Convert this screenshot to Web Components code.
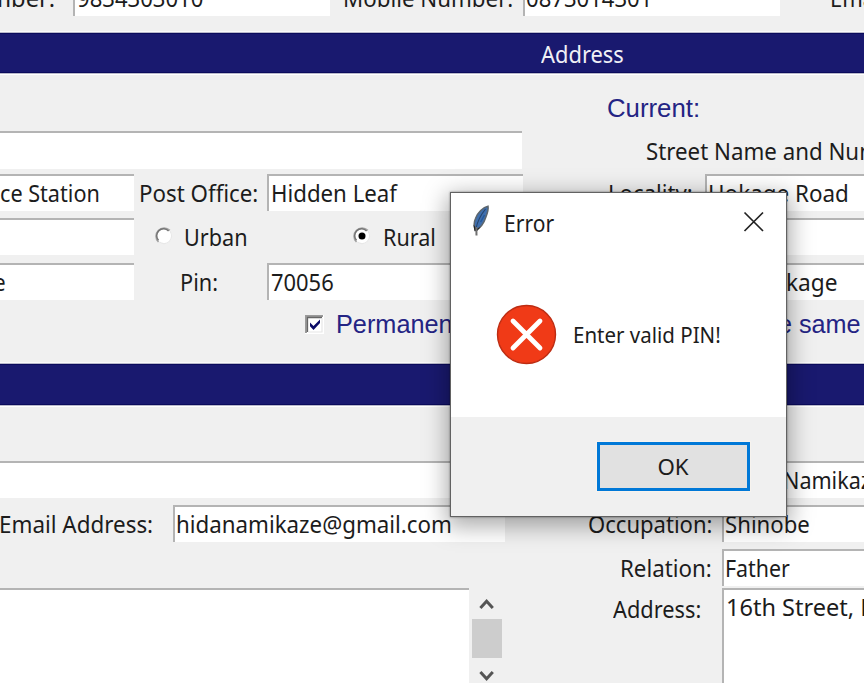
<!DOCTYPE html>
<html lang="en">
<head>
<meta charset="utf-8">
<title>Registration form</title>
<style>
html,body{margin:0;padding:0;width:864px;height:683px;overflow:hidden;background:#f0f0f0}
</style>
</head>
<body>
<registration-form></registration-form>
<script>
const define = (name, html, setup) => customElements.define(name, class extends HTMLElement {
  connectedCallback() {
    if (this.shadowRoot) return;
    this.attachShadow({mode: 'open'}).innerHTML = html;
    if (setup) setup(this, this.shadowRoot);
  }
});
const px = (el, map) => {
  for (const [attr, prop] of Object.entries(map))
    if (el.hasAttribute(attr)) el.style[prop] = el.getAttribute(attr) + 'px';
};

/* Text run fitted to a given advance width, with a 1px inset on each side. */
define('fit-text', `<style>
  :host{display:block;box-sizing:border-box;padding-left:1px;flex:none;height:24px;line-height:24px;white-space:pre;font-family:"Noto Sans",sans-serif;font-size:24px;color:#1c1c1c}
  :host([navy]){font-family:"Liberation Sans",Arial,sans-serif;font-size:25.5px;color:#242484}
  span{display:inline-block;transform-origin:0 50%}
</style><span><slot></slot></span>`, (el, root) => {
  px(el, {w: 'width', x: 'marginLeft', size: 'fontSize'});
  if (el.hasAttribute('y')) {
    el.style.marginTop = el.getAttribute('y') + 'px';
  }
  const s = root.querySelector('span');
  s.style.transform = `scaleX(${(el.getAttribute('w') - 2) / s.offsetWidth})`;
});

define('form-row', `<style>
  :host{display:flex;align-items:center;flex:none;height:37px;overflow:hidden}
</style><slot></slot>`, el => px(el, {h: 'height', y: 'marginTop'}));

define('entry-field', `<style>
  :host{display:flex;flex:none;align-items:center;box-sizing:border-box;height:100%;background:#fff;
    box-shadow:inset 0 2px #b4b4b4;overflow:hidden;padding-right:2px}
  :host([left]){box-shadow:inset 2px 2px #b4b4b4}
  :host([area]){align-items:flex-start}
</style><slot></slot>`, el => px(el, {w: 'width', x: 'marginLeft'}));

define('section-bar', `<style>
  :host{display:flex;flex:none;align-items:center;box-sizing:border-box;height:40px;background:#19196f;
    border-top:1px solid #0b0b5c;border-bottom:1px solid #0b0b5c;box-shadow:0 -1px #b9b9cb,0 1px #b9b9cb,0 2px #fff,0 -2px #fafafa}
</style><slot></slot>`, el => px(el, {h: 'height'}));

define('radio-dot', `<style>:host{display:block;flex:none;width:20px;height:20px}svg{display:block}circle.dot{display:none}:host([checked]) circle.dot{display:block}</style>
<svg width="20" height="20" viewBox="0 0 20 20"><circle cx="10" cy="10" r="8" fill="#fff"/>
<path d="M4.500 16A8 8 0 0 1 15.800 4.400" fill="none" stroke="#a5a5a5" stroke-width="1.700"/>
<path d="M4.500 14.300A6.700 6.700 0 0 1 14.600 5" fill="none" stroke="#757575" stroke-width="1.500"/>
<path d="M16 5.200A7.700 7.700 0 0 1 5.200 16" fill="none" stroke="#e8e8e8" stroke-width="1.200"/>
<circle class="dot" cx="10" cy="10" r="3.500" fill="#000"/></svg>`, el => px(el, {x: 'marginLeft', y: 'marginTop'}));

define('check-square', `<style>:host{display:block;flex:none;width:19px;height:19px;margin-top:1px}svg{display:block}</style>
<svg width="19" height="19" viewBox="0 0 19 19"><path fill="#fff" d="M0 0h19v19H0z"/><path d="M18 1H1v17" fill="none" stroke="#9a9a9a" stroke-width="2"/>
<path d="M17 2.500H2.500V17" fill="none" stroke="#666" stroke-width="1.300"/><path d="M3 17h14V3" fill="none" stroke="#e6e6e6" stroke-width="1.200"/>
<path d="M5 7.600v3.600l3.500 3.800 6.500-7V4.500l-6.500 6.400z" fill="#0b0b68"/></svg>`, el => px(el, {x: 'marginLeft'}));

define('scroll-bar', `<style>
  :host{display:flex;flex-direction:column;flex:none;width:30px;height:100%;margin-left:3px;background:#f0f0f0}
  svg{display:block;flex:none}i{display:block;flex:none;height:39px;width:30px;background:#cdcdcd}
</style><svg width="30" height="31"><path d="M8.400 20l6.200-6.700 6.200 6.700" fill="none" stroke="#555" stroke-width="3"/></svg><i></i>
<svg width="30" height="31"><path d="M8.400 14l6.200 6.700 6.200-6.700" fill="none" stroke="#555" stroke-width="3"/></svg>`);

define('push-button', `<style>
  :host{display:block;flex:none}
  button{display:flex;align-items:center;justify-content:center;box-sizing:border-box;width:153px;height:49px;padding:0 2px 0 0;margin:0;background:#e1e1e1;border:3px solid #0078d7;border-radius:0;box-shadow:0 0 0 1px #f7f3ee}
</style><button><slot></slot></button>`);

define('message-dialog', `<style>
  :host{position:absolute;left:450px;top:192px;width:337px;height:325px;box-sizing:border-box;border:1px solid #626262;background:#fff;
    display:flex;flex-direction:column;box-shadow:0 0 2px rgba(0,0,0,.45),0 6px 22px 3px rgba(0,0,0,.34)}
  header{display:flex;height:60px;flex:none;align-items:center}
  header svg{display:block;flex:none}
  .feather{margin-left:19px;margin-top:-4px}.close{margin-left:188px;margin-top:-2px}
  main{display:flex;flex:none;height:164px;align-items:center}
  main svg{display:block;flex:none;margin:-2px 0 0 44px}
  footer{display:flex;flex:1;align-items:flex-start;justify-content:flex-end;background:#f0f0f0;padding:25px 36px 0 0}
</style>
<header>
<svg class="feather" width="21" height="34" viewBox="0 0 21 34">
<path d="M18 2.200C13 3 7.600 8.800 5.600 14.200C3.600 18.500 3.700 22 5.200 26.600C10 24.500 14 19 15.900 13C17.500 9 18.600 5 18 2.200Z" fill="#3f6fae" stroke="#5d666d" stroke-width="1.500"/>
<path d="M15.500 5C11.500 10 7.500 17 6 24.500" fill="none" stroke="#26456d" stroke-width="1.200"/>
<path d="M14.500 11L10.600 18" stroke="#24589a" stroke-width="1.500"/>
<path d="M3.400 20.500l3.500 4.600 4-2.700-4 4.800-2.400-.5z" fill="#222"/>
<path d="M6.300 23L6.500 31.500" stroke="#707070" stroke-width="2"/></svg>
<fit-text x="12" w="52"><slot name="title"></slot></fit-text>
<svg class="close" width="22" height="22" viewBox="0 0 22 22"><path d="M1.500 1.500l18.500 18.500M20 1.500l-18.500 18.500" stroke="#222" stroke-width="1.700" fill="none"/></svg>
</header>
<main>
<svg width="62" height="62" viewBox="0 0 62 62"><circle cx="31.500" cy="31.500" r="29" fill="#f03a17" stroke="#bd2c12" stroke-width="1.400"/>
<path d="M18 18l27 27M45 18l-27 27" stroke="#fff" stroke-width="4.800" stroke-linecap="round"/></svg>
<fit-text x="15" w="150" size="22.300"><slot></slot></fit-text>
</main>
<footer><push-button><fit-text w="33" size="22.300"><slot name="action"></slot></fit-text></push-button></footer>`);

define('registration-form', `<style>
  :host{display:flex;flex-direction:column;position:relative;width:864px;height:683px;overflow:hidden;background:#f0f0f0}
  section{display:grid;grid-template-columns:540px 324px;flex:none;overflow:hidden}
  .col{display:flex;flex-direction:column;min-width:0;overflow:hidden}
  .address{height:291px}.guardian{height:278px}
</style>
<form-row y="-21" h="36.500">
  <fit-text x="-12" w="68" y="2">mber:</fit-text><entry-field left x="17" w="257"><fit-text x="3" w="128" y="2">9834303010</fit-text></entry-field>
  <fit-text x="12" w="172" y="2">Mobile Number:</fit-text><entry-field left x="9" w="257"><fit-text x="2" w="128" y="2">0873014301</fit-text></entry-field>
  <fit-text x="49" w="47" y="2">Ema</fit-text>
</form-row>
<section-bar style="margin-top:17.500px"><fit-text x="540" w="85" y="2" style="color:#f0f0f6">Address</fit-text></section-bar>
<section class="address">
  <div class="col">
    <form-row y="58" h="38"><entry-field w="522"></entry-field></form-row>
    <form-row y="5"><entry-field w="134"><fit-text x="-1" w="102">ce Station</fit-text></entry-field><fit-text x="4" w="121">Post Office:</fit-text><entry-field left x="8" w="256"><fit-text x="3" w="128">Hidden Leaf</fit-text></entry-field></form-row>
    <form-row y="7"><entry-field w="134"></entry-field><radio-dot x="20" y="-1"></radio-dot><fit-text x="9" y="1" w="66">Urban</fit-text><radio-dot checked x="103" y="-1"></radio-dot><fit-text x="10" y="1" w="55">Rural</fit-text></form-row>
    <form-row y="8"><entry-field w="134"><fit-text x="-7" w="14">e</fit-text></entry-field><fit-text x="45" w="40">Pin:</fit-text><entry-field left x="48" w="256"><fit-text x="3" w="65">70056</fit-text></entry-field></form-row>
    <form-row y="5"><check-square x="305"></check-square><fit-text navy x="11" w="119">Permanen</fit-text></form-row>
  </div>
  <div class="col">
    <form-row y="16"><fit-text navy x="66" w="95">Current:</fit-text></form-row>
    <form-row y="5"><fit-text x="105" y="2" w="236">Street Name and Num</fit-text></form-row>
    <form-row y="6"><fit-text x="67" w="87">Locality:</fit-text><entry-field left x="11" w="240"><fit-text x="2" w="143">Hokage Road</fit-text></entry-field></form-row>
    <form-row y="7"><entry-field left x="165" w="240"></entry-field></form-row>
    <form-row y="8"><entry-field left x="165" w="240"><fit-text x="80" w="54">kage</fit-text></entry-field></form-row>
    <form-row y="5"><fit-text navy x="237" w="85">e same</fit-text></form-row>
  </div>
</section>
<section-bar h="41"></section-bar>
<section class="guardian">
  <div class="col">
    <form-row y="56"><entry-field w="522"></entry-field></form-row>
    <form-row y="7"><fit-text x="-2" w="156">Email Address:</fit-text><entry-field left x="19" w="332"><fit-text x="2" w="278">hidanamikaze@gmail.com</fit-text></entry-field></form-row>
    <form-row y="46" h="110"><entry-field area w="469"></entry-field><scroll-bar></scroll-bar></form-row>
  </div>
  <div class="col">
    <form-row y="56"><entry-field left x="182" w="180"><fit-text x="60" w="90">Namikaz</fit-text></entry-field></form-row>
    <form-row y="7"><fit-text x="47" w="126">Occupation:</fit-text><entry-field left x="9" w="180"><fit-text x="2" w="87">Shinobe</fit-text></entry-field></form-row>
    <form-row y="7"><fit-text x="79" w="94">Relation:</fit-text><entry-field left x="9" w="180"><fit-text x="2" w="67">Father</fit-text></entry-field></form-row>
    <form-row y="2" h="120" style="align-items:flex-start"><fit-text x="72" y="9" w="90">Address:</fit-text><entry-field area left x="20" w="180"><fit-text x="3" y="7" w="154">16th Street, H</fit-text></entry-field></form-row>
  </div>
</section>
<message-dialog><span slot="title">Error</span>Enter valid PIN!<span slot="action">OK</span></message-dialog>`);
</script>
</body>
</html>
